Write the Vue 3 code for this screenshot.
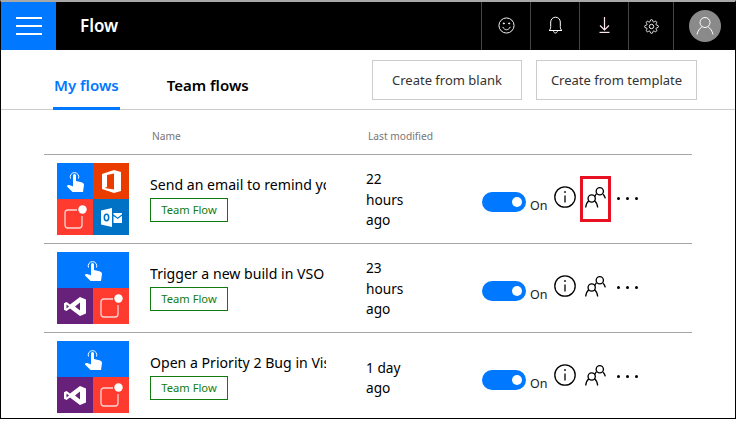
<template>
  <div class="frame">
    <header class="topbar">
      <button class="menu-btn" aria-label="Menu">
        <span></span><span></span><span></span>
      </button>
      <div class="title">Flow</div>
      <div class="top-icons">
        <div class="top-icon">
          <svg width="17" height="17" viewBox="0 0 18 18" fill="none" stroke="#fff" stroke-width="1">
            <circle cx="9" cy="9" r="8" />
            <path d="M5 10.500c1 2 2.500 3 4 3s3-1 4-3" />
            <circle cx="6.200" cy="6.800" r=".6" fill="#fff" />
            <circle cx="11.800" cy="6.800" r=".6" fill="#fff" />
          </svg>
        </div>
        <div class="top-icon">
          <svg width="15" height="18" viewBox="0 0 15 18" fill="none" stroke="#fff" stroke-width="1">
            <path d="M1 14.500c1.300-.8 1.700-2 1.700-4V6a4.800 4.800 0 0 1 9.600 0v4.500c0 2 .4 3.200 1.700 4z" />
            <path d="M5.500 14.500c0 1.600.9 2.500 2 2.500s2-.9 2-2.500" />
          </svg>
        </div>
        <div class="top-icon">
          <svg width="11" height="16" viewBox="0 0 11 16" fill="none" stroke="#ffe6ee" stroke-width="1.200">
            <path d="M5.500 0v12.500M1 8.500l4.500 4.500L10 8.500" />
            <path d="M.5 15.400h10" />
          </svg>
        </div>
        <div class="top-icon narrow">
          <svg class="gear" width="15" height="15" viewBox="0 0 24 24" fill="none" stroke="#fff" stroke-width="1.500">
            <circle cx="12" cy="12" r="3.500" />
            <path d="M19.400 15a1.650 1.650 0 0 0 .33 1.820l.06.06a2 2 0 0 1 0 2.830 2 2 0 0 1-2.830 0l-.06-.06a1.650 1.650 0 0 0-1.820-.33 1.650 1.650 0 0 0-1 1.510V21a2 2 0 0 1-2 2 2 2 0 0 1-2-2v-.09A1.650 1.650 0 0 0 9 19.400a1.650 1.650 0 0 0-1.820.33l-.06.06a2 2 0 0 1-2.830 0 2 2 0 0 1 0-2.830l.06-.06a1.650 1.650 0 0 0 .33-1.820 1.650 1.650 0 0 0-1.510-1H3a2 2 0 0 1-2-2 2 2 0 0 1 2-2h.09A1.650 1.650 0 0 0 4.600 9a1.650 1.650 0 0 0-.33-1.820l-.06-.06a2 2 0 0 1 0-2.830 2 2 0 0 1 2.830 0l.06.06a1.650 1.650 0 0 0 1.820.33H9a1.650 1.650 0 0 0 1-1.510V3a2 2 0 0 1 2-2 2 2 0 0 1 2 2v.09a1.650 1.650 0 0 0 1 1.510 1.650 1.650 0 0 0 1.820-.33l.06-.06a2 2 0 0 1 2.830 0 2 2 0 0 1 0 2.830l-.06.06a1.650 1.650 0 0 0-.33 1.820V9a1.650 1.650 0 0 0 1.510 1H21a2 2 0 0 1 2 2 2 2 0 0 1-2 2h-.09a1.650 1.650 0 0 0-1.510 1z" />
          </svg>
        </div>
        <div class="avatar-cell">
          <div class="avatar">
            <svg width="18" height="18" viewBox="0 0 18 18" fill="none" stroke="#fff" stroke-width="1">
              <circle cx="9" cy="5.500" r="5" />
              <path d="M1 17.500c.7-3.500 2.500-6 4.800-7.500M17 17.500c-.7-3.500-2.500-6-4.800-7.500" />
            </svg>
          </div>
        </div>
      </div>
    </header>

    <nav class="tabbar">
      <div class="tabs">
        <a class="tab active">My flows</a>
        <a class="tab">Team flows</a>
      </div>
      <div class="actions">
        <button class="action">Create from blank</button>
        <button class="action wide">Create from template</button>
      </div>
    </nav>

    <main class="list">
      <div class="list-head">
        <span class="head-name">Name</span>
        <span class="head-date">Last modified</span>
      </div>
      <div v-for="(flow, i) in flows" :key="flow.name" class="row">
        <div class="tiles">
          <div v-for="(tile, t) in flow.tiles" :key="t" class="tile" :class="tile">
            <svg v-if="tile === 'touch' || tile === 'touch-wide'" width="17" height="21" viewBox="0 0 17 21">
              <path d="M3.500 7.500a4.300 4.300 0 1 1 8 0" fill="none" stroke="#fff" stroke-width="1" />
              <path fill="#fff" d="M6 4.500a1.500 1.500 0 0 1 3 0v5.500l5.500 1.200c1.500.4 2.500 1.300 2.500 2.800L16 21H5.500L.3 15.800c-.6-.8 0-1.800 1.200-1.800.8 0 2.700.5 4.500 1.500z" />
            </svg>
            <svg v-else-if="tile === 'office'" width="19" height="23" viewBox="0 0 19 23" fill="#fff">
              <path fill-rule="evenodd" d="M0 19V4L12 0l7 2v19l-7 2zM12 3.500 5 5v12l-2.500 1 9.500 1.500z" />
            </svg>
            <svg v-else-if="tile === 'notify'" width="23" height="24" viewBox="0 0 23 24" fill="none" stroke="#fbd5d2" stroke-width="1.300">
              <path d="M13 5H4a3 3 0 0 0-3 3v12a3 3 0 0 0 3 3h11a3 3 0 0 0 3-3v-9" />
              <circle cx="18.500" cy="4.500" r="4.200" fill="#fff" stroke="none" />
            </svg>
            <svg v-else-if="tile === 'outlook'" width="21" height="19" viewBox="0 0 21 19" fill="#fff">
              <path d="M0 2.500 11 0v19L0 16.500z" />
              <path d="M12.500 5H21v1.200l-4.300 3.300-4.200-3zM12.500 8l4.200 3L21 7.800V15h-8.500z" />
              <ellipse cx="5.500" cy="9.500" rx="2.200" ry="3.200" fill="none" stroke="#0072c6" stroke-width="1.500" />
            </svg>
            <svg v-else width="22" height="19" viewBox="0 0 22 19" fill="#fff">
              <path fill-rule="evenodd" d="M16 0l6 2.400v14.200L16 19 6 11.500 2.500 14 0 12.800V6.200L2.500 5 6 7.500zM16 5.500l-5 4 5 4zM2.500 7.500v4l2.500-2z" />
            </svg>
          </div>
        </div>
        <div class="name-cell">
          <div class="flow-name">{{ flow.name }}</div>
          <span class="badge">Team Flow</span>
        </div>
        <div class="modified">{{ flow.modified }}</div>
        <div class="controls">
          <div class="toggle-wrap">
            <span class="toggle"><i></i></span>
            <span class="on">On</span>
          </div>
          <svg class="info" width="22" height="22" viewBox="0 0 22 22" fill="none" stroke="#000" stroke-width="1.300">
            <circle cx="11" cy="11" r="10.200" />
            <path d="M11 9.500v7" />
            <circle cx="11" cy="6" r=".5" fill="#000" stroke-width="1" />
          </svg>
          <div class="people" :class="{ marked: i === 0 }">
            <svg width="21" height="23" viewBox="0 0 22 23" fill="none" stroke="#000" stroke-width="1.400">
              <circle cx="15.500" cy="5" r="3.800" />
              <path d="M12 7.500c-1 .8-1.500 2-2 3.500M19 8c1 1 1.800 2.500 2.300 4.500" />
              <circle cx="7" cy="12.500" r="3.800" />
              <path d="M4 15c-1.500 1.200-2.800 3.500-3.300 7M10 15c1.500 1.200 2.800 3.500 3.300 7" />
            </svg>
          </div>
          <div class="more"><i></i><i></i><i></i></div>
        </div>
      </div>
    </main>
  </div>
</template>

<script setup>
const flows = [
  {
    name: 'Send an email to remind your team',
    modified: '22 hours ago',
    tiles: ['touch', 'office', 'notify', 'outlook']
  },
  {
    name: 'Trigger a new build in VSO when a button is pressed',
    modified: '23 hours ago',
    tiles: ['touch-wide', 'vs', 'notify']
  },
  {
    name: 'Open a Priority 2 Bug in Visual Studio',
    modified: '1 day ago',
    tiles: ['touch-wide', 'vs', 'notify']
  }
]
</script>

<style>
html,
body {
  margin: 0;
  background: #fff;
}
</style>

<style scoped>
.frame {
  box-sizing: border-box;
  width: 736px;
  height: 419px;
  border-top: 2px solid #a8a8a8;
  border-left: 1px solid #000;
  border-right: 1px solid #000;
  border-bottom: 1px solid #000;
  overflow: hidden;
  font-family: "Noto Sans", "Open Sans", sans-serif;
  color: #000;
  background: #fff;
}

.topbar {
  display: flex;
  height: 48px;
  background: #000;
  color: #fff;
}

.menu-btn {
  width: 55px;
  padding: 0;
  border: 0;
  background: #0078ff;
  display: flex;
  flex-direction: column;
  align-items: center;
  justify-content: center;
  gap: 6px;
}

.menu-btn span {
  width: 26px;
  height: 2px;
  background: #fff;
}

.title {
  margin-left: 24px;
  font-size: 17px;
  font-weight: 600;
  line-height: 48px;
}

.top-icons {
  margin-left: auto;
  display: flex;
}

.top-icon {
  width: 49px;
  box-sizing: border-box;
  border-left: 1px solid #444;
  padding-bottom: 2px;
  display: flex;
  align-items: center;
  justify-content: center;
}

.top-icon.narrow {
  width: 45px;
}

.gear {
  margin-top: 2px;
}

.avatar-cell {
  width: 62px;
  box-sizing: border-box;
  border-left: 1px solid #444;
  display: flex;
  align-items: center;
  padding-left: 15px;
}

.avatar {
  width: 32px;
  height: 32px;
  border-radius: 50%;
  background: #8a8a8a;
  display: flex;
  align-items: center;
  justify-content: center;
}

.tabbar {
  height: 60px;
  box-sizing: border-box;
  border-bottom: 1px solid #ccc;
  display: flex;
  justify-content: space-between;
  padding: 0 38px 0 52px;
}

.tabs {
  display: flex;
  gap: 46px;
}

.tab {
  font-size: 15px;
  font-weight: 600;
  line-height: 70px;
  height: 60px;
  box-sizing: border-box;
  padding: 0 1px;
}

.tab.active {
  color: #0078ff;
  border-bottom: 3px solid #0078ff;
}

.actions {
  display: flex;
  gap: 14px;
  padding-top: 10px;
}

.action {
  width: 150px;
  height: 40px;
  background: #fff;
  border: 1px solid #ccc;
  font: inherit;
  font-size: 13px;
  color: #333;
}

.action.wide {
  width: 161px;
}

.list {
  margin: 0 43px;
}

.list-head {
  height: 44px;
  display: flex;
  align-items: center;
  font-size: 10.200px;
  color: #767676;
  padding-top: 8px;
  box-sizing: border-box;
}

.head-name {
  margin-left: 108px;
  width: 216px;
}

.row {
  height: 89px;
  box-sizing: border-box;
  border-top: 1px solid #a6a6a6;
  display: grid;
  grid-template-columns: 72px 197px 156px auto;
  padding-left: 13px;
}

.tiles {
  margin-top: 8px;
  width: 72px;
  height: 72px;
  display: grid;
  grid-template-columns: 36px 36px;
  grid-auto-rows: 36px;
}

.tile {
  display: flex;
  align-items: center;
  justify-content: center;
}

.touch {
  background: #0078ff;
}

.touch-wide {
  grid-column: span 2;
  background: #0078ff;
}

.office {
  background: #eb3c00;
}

.notify {
  background: #ff3b30;
}

.outlook {
  background: #0072c6;
}

.vs {
  background: #68217a;
}

.name-cell {
  margin-left: 21px;
  padding-top: 20px;
  min-width: 0;
  overflow: hidden;
}

.flow-name {
  font-size: 14.100px;
  line-height: 20px;
  white-space: nowrap;
  overflow: hidden;
}

.badge {
  display: inline-block;
  box-sizing: border-box;
  width: 78px;
  height: 24px;
  margin-top: 3px;
  border: 1px solid #107c10;
  text-align: center;
  font-size: 11.200px;
  line-height: 22px;
  color: #107c10;
}

.modified {
  margin-left: 40px;
  width: 50px;
  align-self: center;
  padding-top: 2px;
  font-size: 13.700px;
  line-height: 20.500px;
}

.controls {
  display: flex;
  align-items: flex-start;
  padding-top: 21px;
}

.toggle-wrap {
  display: flex;
  align-items: flex-end;
  margin-top: 16px;
  gap: 4px;
}

.toggle {
  width: 44px;
  height: 20px;
  border-radius: 10px;
  background: #0078ff;
  position: relative;
  display: block;
}

.toggle i {
  position: absolute;
  right: 4px;
  top: 5px;
  width: 10px;
  height: 10px;
  border-radius: 50%;
  background: #fff;
}

.on {
  font-size: 12.500px;
  line-height: 14px;
  color: #222;
  position: relative;
  top: 1px;
}

.info {
  margin: 10px 0 0 6px;
}

.people {
  width: 31px;
  height: 46px;
  box-sizing: border-box;
  margin-left: 4px;
  display: flex;
  justify-content: center;
  padding-top: 10px;
}

.people.marked {
  border: 3px solid #e81123;
  padding-top: 7px;
}

.more {
  display: flex;
  gap: 6px;
  margin: 21px 0 0 6px;
}

.more i {
  width: 3px;
  height: 3px;
  border-radius: 50%;
  background: #000;
}
</style>
